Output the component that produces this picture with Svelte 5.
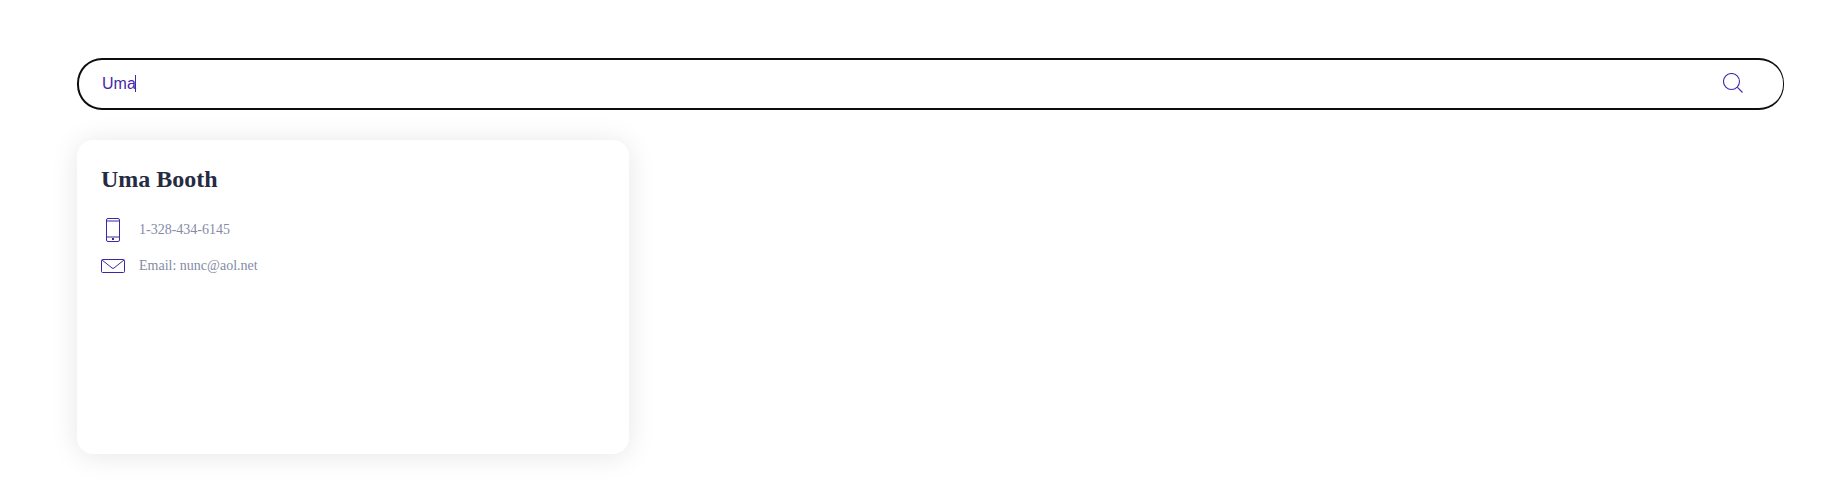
<script>
  const contacts = [{ name: 'Uma Booth', phone: '1-328-434-6145', email: 'nunc@aol.net' }];
  let query = $state('Uma');
  let focused = $state(false);
  const found = $derived(
    contacts.filter((c) => c.name.toLowerCase().includes(query.toLowerCase()))
  );
</script>

<main>
  <form class="search" role="search" onsubmit={(e) => e.preventDefault()}>
    <input
      type="text"
      aria-label="Search contacts"
      autocomplete="off"
      bind:value={query}
      onfocus={() => (focused = true)}
      onblur={() => (focused = false)}
    />
    {#if !focused}
      <span class="caret" aria-hidden="true"></span>
    {/if}
    <button type="submit" aria-label="Search">
      <svg width="20" height="20" viewBox="0 0 20 20" fill="none" stroke="#4628a8" stroke-width="1.1">
        <circle cx="8.5" cy="8.5" r="8" />
        <path d="M14.2 14.2 19.5 19.5" />
      </svg>
    </button>
  </form>

  <section class="cards">
    {#each found as person}
      <article class="card">
        <h2>{person.name}</h2>
        <ul>
          <li>
            <svg width="24" height="24" viewBox="0 0 24 24" fill="none" stroke="#4025a8">
              <rect x="5.5" y=".5" width="13" height="23" rx="1.5" />
              <path d="M6 3h12M6 19h12" stroke-width="2" opacity=".5" />
              <path d="M11 21h2" stroke-width="2" />
            </svg>
            <span>{person.phone}</span>
          </li>
          <li>
            <svg width="24" height="24" viewBox="0 0 24 24" fill="none" stroke="#4025a8">
              <rect x=".5" y="5.5" width="23" height="13" rx="1" />
              <path d="M1 6 11 14Q12 14.8 13 14L23 6" />
            </svg>
            <span>Email: {person.email}</span>
          </li>
        </ul>
      </article>
    {/each}
  </section>
</main>

<style>
  main {
    padding: 58px 43px 36px 77px;
    font-family: "Liberation Serif", "Times New Roman", serif;
  }
  .search {
    position: relative;
    display: flex;
    align-items: center;
    height: 52px;
    box-sizing: border-box;
    border: 2px solid #0e0e12;
    border-right-width: 1px;
    border-radius: 25px;
    padding: 0 40px 0 23px;
    margin-bottom: 30px;
  }
  input {
    flex: 1;
    min-width: 0;
    height: 100%;
    padding: 0;
    border: 0;
    outline: 0;
    background: none;
    color: #4628a8;
    font: 16px "Liberation Sans", Arial, sans-serif;
  }
  .caret {
    position: absolute;
    left: 56px;
    top: 15px;
    width: 1px;
    height: 17px;
    background: #4628a8;
  }
  button {
    display: flex;
    padding: 0 0 2px;
    border: 0;
    background: none;
    cursor: pointer;
  }
  .cards {
    display: grid;
    grid-template-columns: repeat(auto-fill, minmax(min(100%, 440px), 1fr));
    gap: 25px;
  }
  .card {
    box-sizing: border-box;
    min-height: 314px;
    padding: 24px;
    border-radius: 16px;
    background: #fff;
    box-shadow: 0 2px 28px rgba(0, 0, 0, 0.1);
  }
  h2 {
    margin: 0 0 24px;
    font-size: 24px;
    line-height: 30px;
    color: #252b42;
  }
  ul {
    display: grid;
    gap: 12px;
    margin: 0;
    padding: 0;
    list-style: none;
  }
  li {
    display: flex;
    align-items: center;
    gap: 14px;
    font-size: 14px;
    line-height: 24px;
    color: #858ba5;
  }
  svg {
    flex: none;
    display: block;
  }
</style>
